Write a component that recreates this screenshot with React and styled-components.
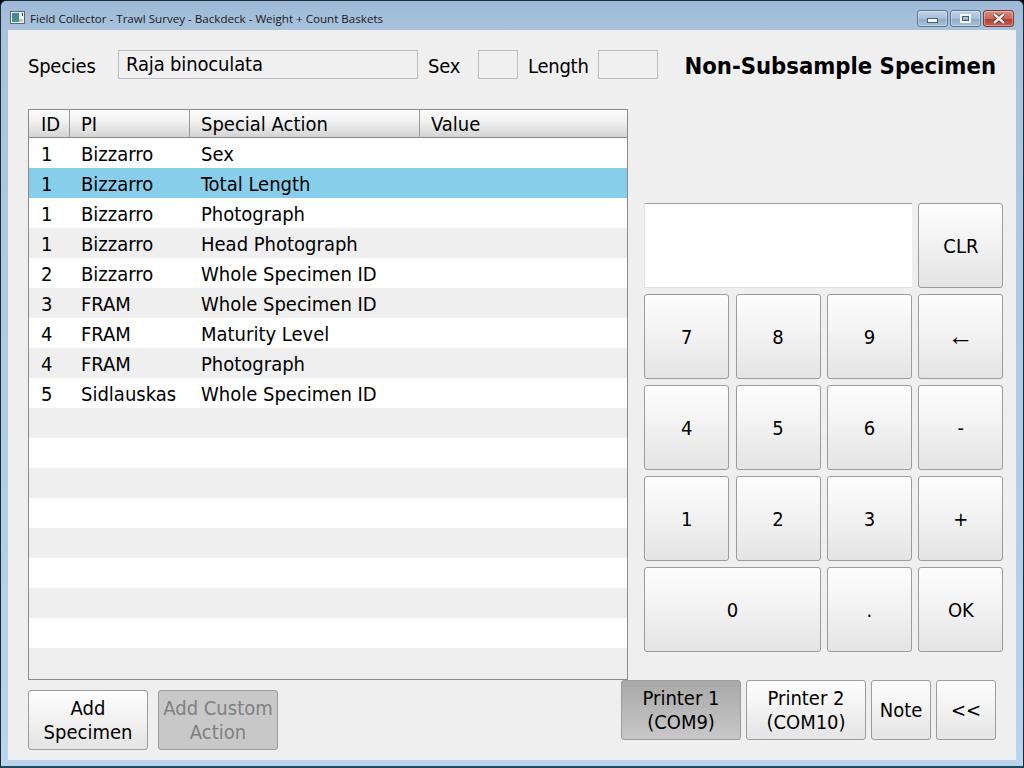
import styled, { createGlobalStyle } from "styled-components";

const GlobalStyle = createGlobalStyle`
  html, body {
    margin: 0;
    padding: 0;
    background: #000;
  }
  * {
    box-sizing: border-box;
  }
`;

const Window = styled.div`
  width: 1024px;
  height: 768px;
  display: flex;
  flex-direction: column;
  padding: 0 7px 6px;
  overflow: hidden;
  border: 1px solid #1c2b36;
  border-bottom: 2px solid #1c4a5c;
  border-radius: 6px 6px 0 0;
  background: linear-gradient(to bottom, #9db9d7 0, #a9c3de 30px, #b9d4ec 100%);
  font-family: "DejaVu Sans Condensed", "DejaVu Sans", sans-serif;
  color: #000;
`;

const TitleBar = styled.div`
  height: 29px;
  padding-top: 6px;
  display: flex;
  align-items: center;
  flex-shrink: 0;
`;

const AppIcon = styled.svg`
  width: 15px;
  height: 13px;
  margin: -2px 5px 0 2px;
`;

const TitleText = styled.span`
  flex: 1;
  font-family: "Open Sans", sans-serif;
  font-size: 11.6px;
  color: #1a1a1a;
`;

const WinButtons = styled.div`
  display: flex;
  gap: 2px;
  margin-right: 2px;
`;

const WinButton = styled.div`
  width: 31px;
  height: 17px;
  display: flex;
  align-items: center;
  justify-content: center;
  border: 1px solid ${(p) => (p.$close ? "#7c3a36" : "#62748a")};
  border-radius: 3px;
  background: ${(p) =>
    p.$close
      ? "linear-gradient(to bottom, #d88d82 0, #c9675c 50%, #b33a2e 52%, #c4645a 100%)"
      : "linear-gradient(to bottom, #c0d3e6 0, #a6bfd9 50%, #8ba9c8 52%, #a8c3dc 100%)"};
  box-shadow: inset 0 0 0 1px rgba(255, 255, 255, 0.35);
`;

const MinGlyph = styled.div`
  width: 11px;
  height: 5px;
  margin-top: 4px;
  background: #f4f6f9;
  border: 1px solid #4c5d72;
`;

const MaxGlyph = styled.div`
  width: 11px;
  height: 9px;
  background: transparent;
  border: 2px solid #f4f6f9;
  outline: 1px solid #4c5d72;
  outline-offset: -3px;
`;

const Content = styled.div`
  flex: 1;
  display: flex;
  flex-direction: column;
  padding: 20px 20px 10px 20px;
  background: #efefef;
`;

const TopRow = styled.div`
  height: 29px;
  display: flex;
  align-items: center;
`;

const FieldLabel = styled.span`
  font-size: 20px;
  letter-spacing: -0.25px;
  margin-top: 3px;
  margin-left: ${(p) => p.$left || 0}px;
  width: ${(p) => p.$width}px;
  flex-shrink: 0;
`;

const ReadOnlyField = styled.div`
  width: ${(p) => p.$width}px;
  height: 29px;
  flex-shrink: 0;
  padding: 0 0 1px 7px;
  display: flex;
  align-items: center;
  font-size: 20px;
  letter-spacing: -0.15px;
  border: 1px solid #bdbdbd;
  background: #f0f0f0;
`;

const ModeTitle = styled.div`
  margin-left: auto;
  margin-top: 3px;
  font-size: 23.6px;
  font-weight: bold;
  white-space: nowrap;
`;

const Main = styled.div`
  display: flex;
  gap: 16.2px;
  margin-top: 30px;
`;

const Table = styled.div`
  width: 600px;
  height: 571px;
  flex-shrink: 0;
  border: 1px solid #8a8a8a;
  background: #efefef;
  overflow: hidden;
`;

const HeaderRow = styled.div`
  height: 28px;
  display: grid;
  grid-template-columns: 40px 120px 230px 1fr;
  border-bottom: 1px solid #8a8a8a;
  background: linear-gradient(to bottom, #fcfcfc 0, #f2f2f2 40%, #d4d4d4 100%);
`;

const HeaderCell = styled.div`
  padding: 1px 0 0 ${(p) => (p.$first ? "12px" : "11px")};
  font-size: 20px;
  line-height: 27px;
  border-left: ${(p) => (p.$first ? "none" : "1px solid #9a9a9a")};
`;

const Row = styled.div`
  height: 30px;
  display: grid;
  grid-template-columns: 40px 120px 230px 1fr;
  background: ${(p) => (p.$selected ? "#87ceeb" : p.$odd ? "#efefef" : "#ffffff")};
`;

const Cell = styled.div`
  padding: 2px 0 0 12px;
  font-size: 20px;
  line-height: 28px;
`;

const Keypad = styled.div`
  width: 359px;
  margin-top: 94px;
  display: grid;
  grid-template-columns: repeat(4, 85px);
  grid-auto-rows: 85px;
  column-gap: 6.4px;
  row-gap: 6px;
`;

const Display = styled.div`
  grid-column: span 3;
  background: #ffffff;
  border-top: 1px solid #a0a0a0;
  border-left: 1px solid #e3e3e8;
  border-bottom: 1px solid #e3e3e3;
`;

const Button = styled.button`
  width: ${(p) => p.$width || "auto"};
  height: ${(p) => p.$height || "auto"};
  grid-column: ${(p) => (p.$wide ? "span 2" : "auto")};
  padding: 0;
  font-family: inherit;
  font-size: 20px;
  line-height: 24px;
  color: ${(p) => (p.disabled ? "#808080" : "#000")};
  border: 1px solid ${(p) => (p.disabled ? "#9a9a9a" : "#9c9c9c")};
  border-radius: 3px;
  background: ${(p) =>
    p.disabled
      ? "#c8c8c8"
      : p.$active
      ? "linear-gradient(to bottom, #a8a8a8 0, #c8c8c8 100%)"
      : "linear-gradient(to bottom, #fdfdfd 0, #f4f4f4 40%, #e4e4e4 100%)"};
`;

const ArrowGlyph = styled.span`
  font-family: "Liberation Sans", sans-serif;
  font-size: 26px;
  line-height: 24px;
`;

const Footer = styled.div`
  display: flex;
  justify-content: space-between;
  align-items: flex-start;
`;

const LeftActions = styled.div`
  display: flex;
  gap: 10px;
  margin-top: 10px;
`;

const RightActions = styled.div`
  display: flex;
  gap: 5px;
`;

const rows = [
  ["1", "Bizzarro", "Sex"],
  ["1", "Bizzarro", "Total Length"],
  ["1", "Bizzarro", "Photograph"],
  ["1", "Bizzarro", "Head Photograph"],
  ["2", "Bizzarro", "Whole Specimen ID"],
  ["3", "FRAM", "Whole Specimen ID"],
  ["4", "FRAM", "Maturity Level"],
  ["4", "FRAM", "Photograph"],
  ["5", "Sidlauskas", "Whole Specimen ID"],
];

const allRows = [...rows, ...Array(9).fill(["", "", ""])];
const keys = ["7", "8", "9", "←", "4", "5", "6", "-", "1", "2", "3", "+"];

export default function App() {
  return (
    <Window>
      <GlobalStyle />
      <TitleBar>
        <AppIcon viewBox="0 0 15 13">
          <defs>
            <linearGradient id="appIconFill" x1="0" y1="0" x2="0" y2="1">
              <stop offset="0" stopColor="#4f7f9e" />
              <stop offset="1" stopColor="#3f9a7e" />
            </linearGradient>
          </defs>
          <rect x="0.5" y="0.5" width="14" height="12" fill="#eef1f1" stroke="#5a686e" />
          <rect x="2" y="2" width="7" height="9" fill="url(#appIconFill)" />
          <rect x="9" y="8" width="4" height="3" fill="#c4cacb" />
          <rect x="12" y="2" width="1" height="3" fill="#2f3a40" />
        </AppIcon>
        <TitleText>Field Collector - Trawl Survey - Backdeck - Weight + Count Baskets</TitleText>
        <WinButtons>
          <WinButton><MinGlyph /></WinButton>
          <WinButton><MaxGlyph /></WinButton>
          <WinButton $close>
            <svg width="14" height="11" viewBox="0 0 14 11">
              <path d="M2 1 L12 10 M12 1 L2 10" stroke="#5a2a26" strokeWidth="4" />
              <path d="M2 1 L12 10 M12 1 L2 10" stroke="#f6eeee" strokeWidth="2.4" />
            </svg>
          </WinButton>
        </WinButtons>
      </TitleBar>
      <Content>
        <TopRow>
          <FieldLabel $width={90}>Species</FieldLabel>
          <ReadOnlyField $width={300}>Raja binoculata</ReadOnlyField>
          <FieldLabel $left={10} $width={50}>Sex</FieldLabel>
          <ReadOnlyField $width={40} />
          <FieldLabel $left={10} $width={70}>Length</FieldLabel>
          <ReadOnlyField $width={60} />
          <ModeTitle>Non-Subsample Specimen</ModeTitle>
        </TopRow>
        <Main>
          <Table>
            <HeaderRow>
              <HeaderCell $first>ID</HeaderCell>
              <HeaderCell>PI</HeaderCell>
              <HeaderCell>Special Action</HeaderCell>
              <HeaderCell>Value</HeaderCell>
            </HeaderRow>
            {allRows.map((row, i) => (
              <Row key={i} $odd={i % 2 === 1} $selected={i === 1}>
                <Cell>{row[0]}</Cell>
                <Cell>{row[1]}</Cell>
                <Cell>{row[2]}</Cell>
                <Cell />
              </Row>
            ))}
          </Table>
          <Keypad>
            <Display />
            <Button>CLR</Button>
            {keys.map((k) => (
              <Button key={k}>{k === "←" ? <ArrowGlyph>←</ArrowGlyph> : k}</Button>
            ))}
            <Button $wide>0</Button>
            <Button>.</Button>
            <Button>OK</Button>
          </Keypad>
        </Main>
        <Footer>
          <LeftActions>
            <Button $width="120px" $height="60px">Add<br />Specimen</Button>
            <Button $width="120px" $height="60px" disabled>Add Custom<br />Action</Button>
          </LeftActions>
          <RightActions>
            <Button $width="120px" $height="60px" $active>Printer 1<br />(COM9)</Button>
            <Button $width="120px" $height="60px">Printer 2<br />(COM10)</Button>
            <Button $width="60px" $height="60px">Note</Button>
            <Button $width="60px" $height="60px">&lt;&lt;</Button>
          </RightActions>
        </Footer>
      </Content>
    </Window>
  );
}
